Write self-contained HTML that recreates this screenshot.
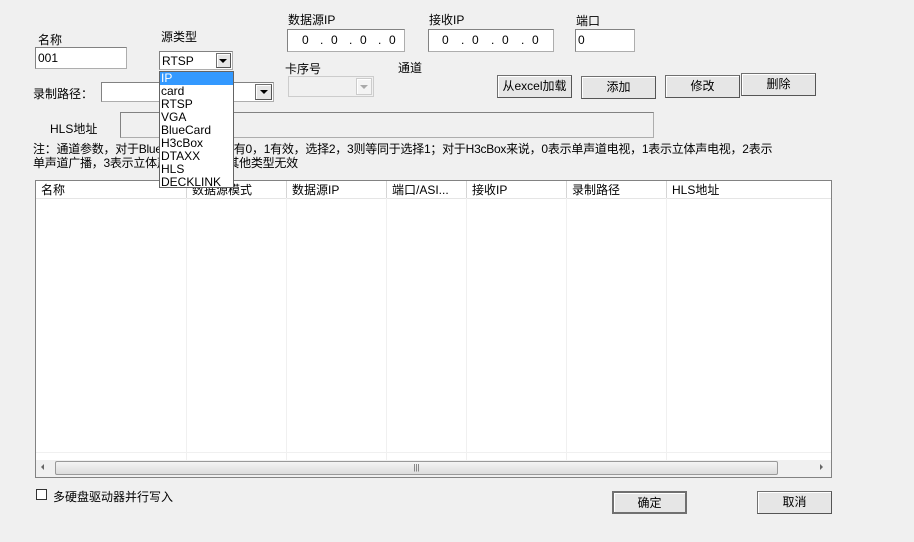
<!DOCTYPE html>
<html><head><meta charset="utf-8"><style>
body{margin:0;width:914px;height:542px;background:#f0f0f0;position:relative;overflow:hidden;font-family:"Liberation Sans","Noto Sans CJK SC",sans-serif;font-size:12px;color:#000}
.a{position:absolute;white-space:nowrap}
.in{position:absolute;background:#fff;border:1px solid #adadad;border-top-color:#828282;border-left-color:#828282;box-sizing:border-box}
.btn{position:absolute;box-sizing:border-box;border:1px solid #707070;border-right-color:#555;border-bottom-color:#555;background:#e6e6e6;box-shadow:inset 1px 1px #fff;text-align:center;font-size:12px}
.arr{position:absolute;width:0;height:0;border-left:4px solid transparent;border-right:4px solid transparent;border-top:4px solid #000}
.col{position:absolute;top:181px;height:17px;border-right:1px solid #d5d5d5;padding-left:5px;box-sizing:border-box;line-height:18px;background:#fff}
.vl{position:absolute;top:198px;height:262px;width:1px;background:#f0f0f0}
.in span{position:absolute;top:3px}
</style></head><body>
<div class="a" style="left:38px;top:31px">名称</div>
<div class="in" style="left:35px;top:47px;width:92px;height:22px;padding:3px 2px">001</div>
<div class="a" style="left:161px;top:28px">源类型</div>
<div class="in" style="left:159px;top:51px;width:74px;height:19px;padding:2px 2px">RTSP</div>
<div class="btn" style="left:216px;top:53px;width:15px;height:15px;"></div><div class="arr" style="left:219px;top:59px"></div>
<div class="a" style="left:288px;top:11px">数据源IP</div>
<div class="in" style="left:287px;top:29px;width:118px;height:23px"><span style="left:14px">0</span><span style="left:32px">.</span><span style="left:43px">0</span><span style="left:61px">.</span><span style="left:72px">0</span><span style="left:90px">.</span><span style="left:101px">0</span></div>
<div class="a" style="left:429px;top:11px">接收IP</div>
<div class="in" style="left:428px;top:29px;width:126px;height:23px"><span style="left:13px">0</span><span style="left:32px">.</span><span style="left:43px">0</span><span style="left:62px">.</span><span style="left:73px">0</span><span style="left:92px">.</span><span style="left:103px">0</span></div>
<div class="a" style="left:576px;top:12px">端口</div>
<div class="in" style="left:575px;top:29px;width:60px;height:23px;padding:3px 2px">0</div>
<div class="a" style="left:285px;top:60px">卡序号</div>
<div class="a" style="left:398px;top:59px">通道</div>
<div class="in" style="left:288px;top:76px;width:86px;height:21px;background:#f0f0f0;border-color:#ccc"></div>
<div class="btn" style="left:356px;top:78px;width:16px;height:17px;border-color:#ccc;background:#f4f4f4"></div><div class="arr" style="left:360px;top:85px;border-top-color:#aaa"></div>
<div class="a" style="left:33px;top:85px">录制路径：</div>
<div class="in" style="left:101px;top:82px;width:173px;height:20px"></div>
<div class="btn" style="left:255px;top:84px;width:17px;height:16px"></div><div class="arr" style="left:260px;top:90px"></div>
<div class="btn" style="left:497px;top:75px;width:75px;height:23px;line-height:21px">从excel加载</div>
<div class="btn" style="left:581px;top:76px;width:75px;height:23px;line-height:21px">添加</div>
<div class="btn" style="left:665px;top:75px;width:75px;height:23px;line-height:21px">修改</div>
<div class="btn" style="left:741px;top:73px;width:75px;height:23px;line-height:21px">删除</div>
<div class="a" style="left:50px;top:120px">HLS地址</div>
<div class="in" style="left:120px;top:112px;width:534px;height:26px;background:#f0f0f0"></div>
<div class="a" style="left:33px;top:142px;line-height:14px;letter-spacing:-0.25px">注：通道参数，对于BlueCard来说，只有0，1有效，选择2，3则等同于选择1；对于H3cBox来说，0表示单声道电视，1表示立体声电视，2表示<br>单声道广播，3表示立体声广播，对于其他类型无效</div>
<div class="in" style="left:35px;top:180px;width:797px;height:298px;border-color:#828282"></div>
<div class="col" style="left:36px;width:151px">名称</div>
<div class="col" style="left:187px;width:100px">数据源模式</div>
<div class="col" style="left:287px;width:100px">数据源IP</div>
<div class="col" style="left:387px;width:80px">端口/ASI...</div>
<div class="col" style="left:467px;width:100px">接收IP</div>
<div class="col" style="left:567px;width:100px">录制路径</div>
<div class="col" style="left:667px;width:164px;border-right:0">HLS地址</div>
<div class="a" style="left:36px;top:198px;width:795px;height:1px;background:#e5e5e5"></div>
<div class="vl" style="left:186px"></div><div class="vl" style="left:286px"></div><div class="vl" style="left:386px"></div><div class="vl" style="left:466px"></div><div class="vl" style="left:566px"></div><div class="vl" style="left:666px"></div>
<div class="a" style="left:36px;top:452px;width:795px;height:1px;background:#f0f0f0"></div>
<div class="a" style="left:36px;top:460px;width:795px;height:17px;background:#f0f0f0"></div>
<div class="a" style="left:55px;top:461px;width:723px;height:14px;background:linear-gradient(#f4f4f4,#dcdcdc);border:1px solid #999;border-radius:2px;box-sizing:border-box;text-align:center;font-size:8px;line-height:12px;color:#555">|||</div>
<div class="a" style="left:41px;top:464px;border-right:3px solid #666;border-top:3px solid transparent;border-bottom:3px solid transparent"></div>
<div class="a" style="left:820px;top:464px;border-left:3px solid #666;border-top:3px solid transparent;border-bottom:3px solid transparent"></div>
<div class="a" style="left:159px;top:71px;width:75px;height:117px;background:#fff;border:1px solid #646464;box-sizing:border-box;line-height:13px">
<div style="background:#3399ff;color:#fff;padding-left:1px;margin-top:0">IP</div>
<div style="padding-left:1px">card<br>RTSP<br>VGA<br>BlueCard<br>H3cBox<br>DTAXX<br>HLS<br>DECKLINK</div></div>
<div class="a" style="left:36px;top:489px;width:11px;height:11px;background:#fff;border:1px solid #333;box-sizing:border-box"></div>
<div class="a" style="left:53px;top:488px">多硬盘驱动器并行写入</div>
<div class="btn" style="left:612px;top:491px;width:75px;height:23px;line-height:21px;border:2px solid #707070">确定</div>
<div class="btn" style="left:757px;top:491px;width:75px;height:23px;line-height:21px">取消</div>
</body></html>
